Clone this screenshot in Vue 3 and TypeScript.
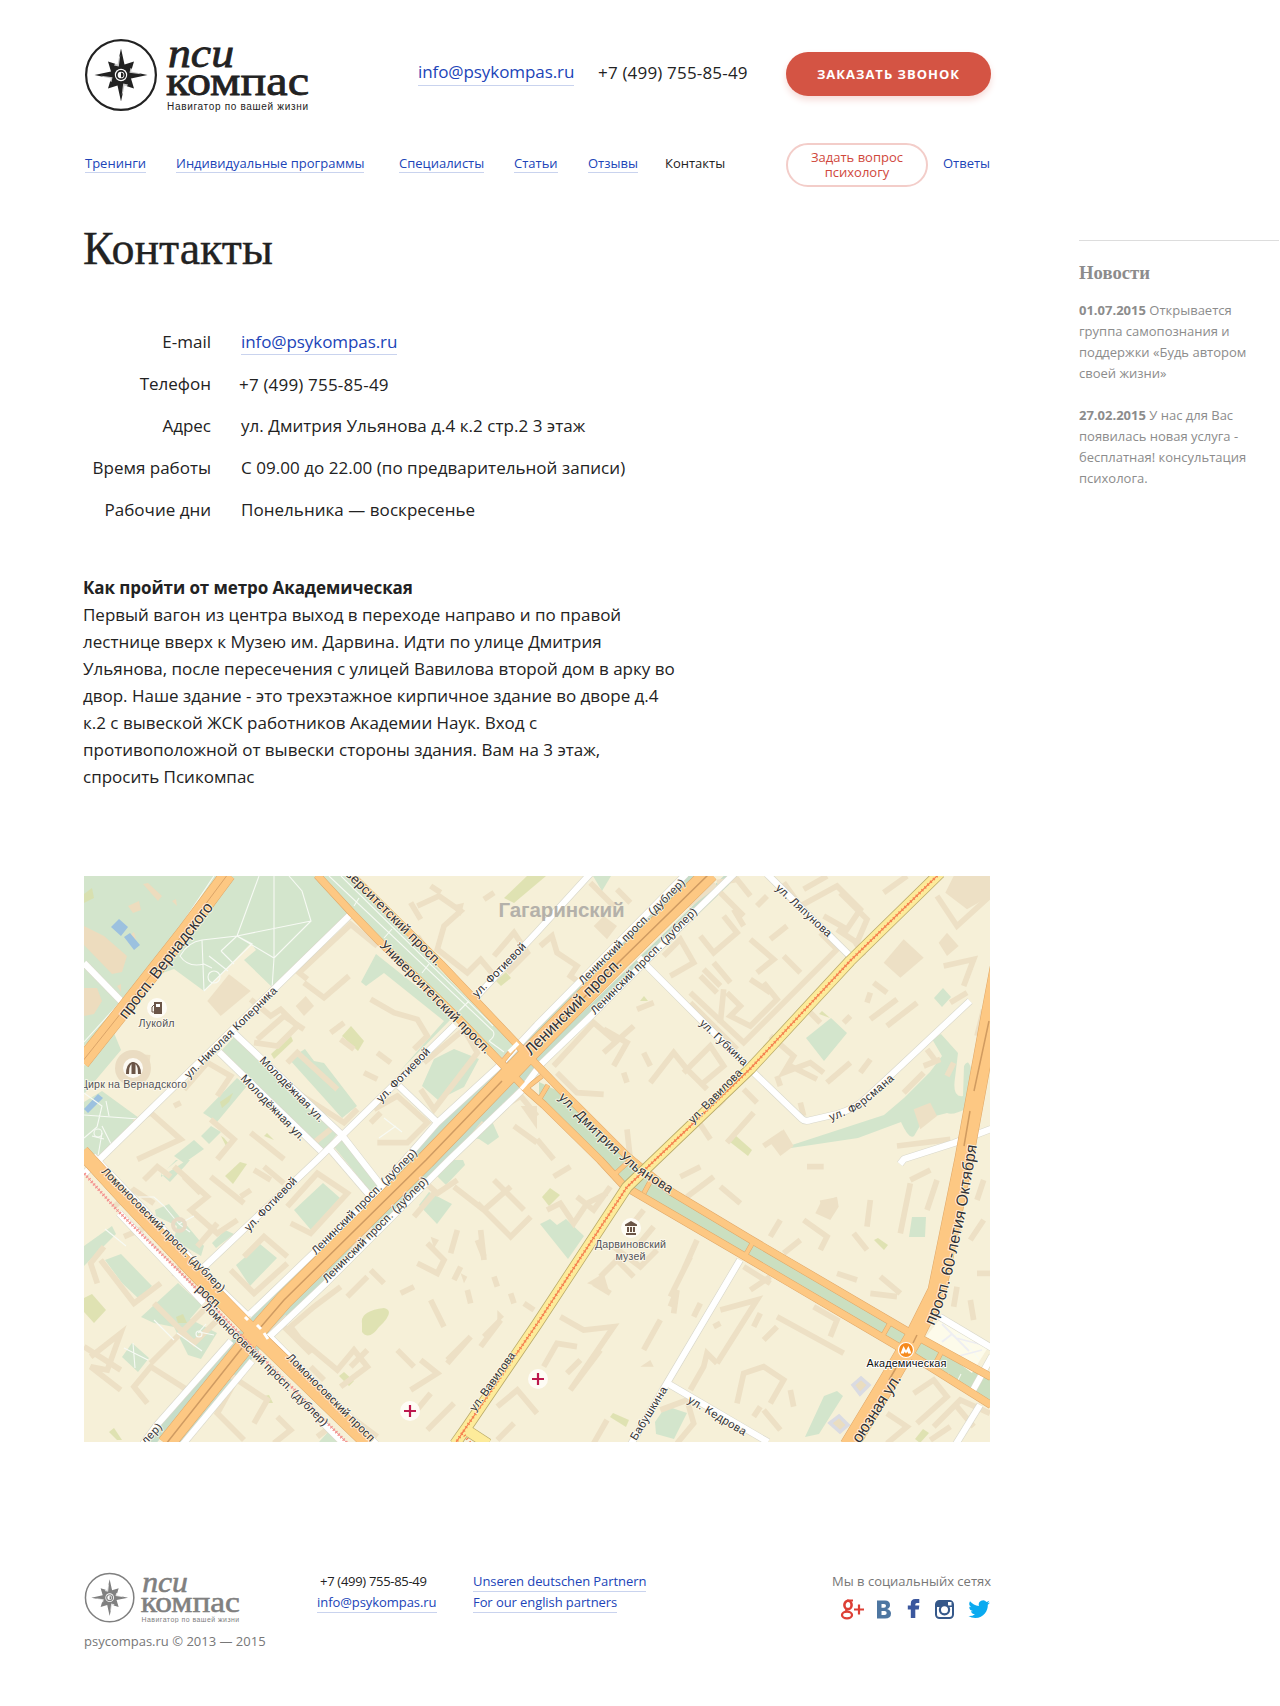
<script setup lang="ts">
interface Label { t: string; p: number[]; s?: number; c?: string }

const nav = ['Тренинги', 'Индивидуальные программы', 'Специалисты', 'Статьи', 'Отзывы', 'Контакты']

const contacts = [
  { k: 'E-mail', v: 'info@psykompas.ru', link: true },
  { k: 'Телефон', v: '+7 (499) 755-85-49', tel: true },
  { k: 'Адрес', v: 'ул. Дмитрия Ульянова д.4 к.2 стр.2 3 этаж' },
  { k: 'Время работы', v: 'С 09.00 до 22.00 (по предварительной записи)' },
  { k: 'Рабочие дни', v: 'Понельника — воскресенье' },
]

const route = [
  'Первый вагон из центра выход в переходе направо и по правой',
  'лестнице вверх к Музею им. Дарвина. Идти по улице Дмитрия',
  'Ульянова, после пересечения с улицей Вавилова второй дом в арку во',
  'двор. Наше здание - это трехэтажное кирпичное здание во дворе д.4',
  'к.2 с вывеской ЖСК работников Академии Наук. Вход с',
  'противоположной от вывески стороны здания. Вам на 3 этаж,',
  'спросить Псикомпас',
]

const news = [
  { d: '01.07.2015', l: ['Открывается', 'группа самопознания и', 'поддержки «Будь автором', 'своей жизни»'] },
  { d: '27.02.2015', l: ['У нас для Вас', 'появилась новая услуга -', 'бесплатная! консультация', 'психолога.'] },
]

// Street names: baseline points of each label in map coordinates
const labels: Label[] = [
  { t: 'просп. Вернадского', p: [42, 144, 130, 31], s: 16 },
  { t: 'ул. Николая Коперника', p: [105, 203, 194, 115] },
  { t: 'Молодёжная ул.', p: [175, 185, 236, 247] },
  { t: 'Молодёжная ул.', p: [156, 203, 217, 266] },
  { t: 'Университетский просп.', p: [295, 70, 402, 179], s: 13.5 },
  { t: 'Университетский просп.', p: [244, -18, 353, 91], s: 13.5 },
  { t: 'ул. Фотиевой', p: [393, 122, 443, 71] },
  { t: 'ул. Фотиевой', p: [297, 227, 347, 176] },
  { t: 'ул. Фотиевой', p: [165, 356, 214, 305] },
  { t: 'Ленинский просп. (дублер)', p: [499, 109, 602, 7] },
  { t: 'Ленинский просп. (дублер)', p: [511, 139, 614, 36] },
  { t: 'Ленинский просп.', p: [447, 180, 539, 88], s: 16 },
  { t: 'Ленинский просп. (дублер)', p: [232, 379, 334, 277] },
  { t: 'Ленинский просп. (дублер)', p: [243, 407, 345, 305] },
  { t: 'росп.', p: [111, 414, 134, 435], s: 13.5 },
  { t: 'Ломоносовский просп. (дублер)', p: [17, 296, 137, 417] },
  { t: 'Ломоносовский просп. (дублер)', p: [118, 431, 240, 551] },
  { t: 'Ломоносовский просп.', p: [202, 482, 289, 569] },
  { t: 'лер)', p: [62, 569, 79, 551] },
  { t: 'ул. Ляпунова', p: [691, 13, 744, 62] },
  { t: 'ул. Губкина', p: [615, 148, 660, 191] },
  { t: 'ул. Вавилова', p: [609, 248, 659, 197] },
  { t: 'ул. Ферсмана', p: [747, 245, 773, 235, 790, 221, 811, 203] },
  { t: 'ул. Дмитрия Ульянова', p: [474, 222, 508, 257, 531, 279, 550, 295, 586, 318], s: 13.5 },
  { t: 'ул. Вавилова', p: [391, 536, 432, 479] },
  { t: 'просп. 60-летия Октября', p: [850, 450, 862, 421, 870, 389, 882, 335, 893, 269], s: 16 },
  { t: 'оюзная ул.', p: [776, 568, 818, 502], s: 16 },
  { t: 'Бабушкина', p: [552, 565, 584, 513] },
  { t: 'ул. Кедрова', p: [603, 526, 660, 560] },
]

const path = (p: number[]) => {
  let d = ''
  for (let i = 0; i < p.length; i += 2) d += (i ? 'L' : 'M') + p[i] + ' ' + p[i + 1]
  return d
}
const len = (p: number[]) => {
  let s = 0
  for (let i = 2; i < p.length; i += 2) s += Math.hypot(p[i] - p[i - 2], p[i + 1] - p[i - 1])
  return s - 0.5
}

const white = [
  'M0 87L38 126', 'M268 37L17 282L0 298', 'M150 157L257 258L299 312', 'M135 176L237 275', 'M245 272L287 321',
  'M371 149L233 284L120 391', 'M393 120L453 56L506 -2', 'M315 210L355 248', 'M602 -2L453 149L413 192L353 247L290 319L165 439',
  'M651 -3L614 33L507 140L457 188L438 214L364 285L344 305L241 408L185 461', 'M147 465L72 550L59 568', 'M168 485L99 568',
  'M9 280L137 414L165 441M187 462L292 568', 'M35 337L120 427M238 546L260 568', 'M683 -2L766 80',
  'M555 82L666 193L718 243Q721 246 727 244L753 238Q770 233 780 224L806 200L886 125', 'M907 253L870 267L820 283L816 288',
  'M656 384L583 507L547 568', 'M583 507L684 566', 'M856 441L908 472', 'M908 480L888 516', 'M896 529L872 568',
]
const orange = [
  { d: 'M233 -1L268 37L297 67L375 143L420 190L443 214L460 229L516 284L540 310L660 380L813 470L907 529', w: 7 },
  { d: 'M266 -2L357 88L430 165L447 183L476 213L543 280L586 315L666 363L823 455L907 501', w: 7 },
  { d: 'M418 186L430 172M440 214L458 200M455 224L464 209M530 299L545 285M560 317L567 304M661 380L669 366M798 461L806 447M850 490L858 475', w: 4 },
  { d: 'M144 -2L100 57L37 137L-2 186', w: 15 },
  { d: 'M626 -3L536 85L453 169L430 193L342 284L200 424L172 456L82 568', w: 17.5 },
  { d: 'M-2 276L43 325L110 396L167 454L285 568', w: 14 },
  { d: 'M925 40L908 130L880 283L853 415L830 461L803 507L765 570', w: 18 },
]

// Building outlines, one group per quarter of the map, three units per pixel
const quads = [
  { x: 0, y: 0, b: [
    'M670 310L645 290L800 145L880 210M660 320L720 365L795 300', 'M500 370L560 420L590 400L640 450L580 510L510 500', 'M1000 90L1065 60L1130 105L1080 150L1060 220L1150 290L1190 250L1240 310', 'M860 370L930 410L1000 430L1030 480L990 520', 'M1020 560L1140 460L1180 530L1050 700L1010 640',
    'M520 490L600 420L660 460', 'M300 640L370 560L440 600L400 660', 'M150 740L200 710L290 790L160 850', 'M610 560L640 530L760 640M640 650L780 740L820 700', 'M740 470L780 440M770 490L810 520M880 530L920 560M840 590L880 610', 'M860 740L890 710M870 700L940 660L1030 740L970 800L880 800', 'M1200 70L1230 50M1040 30L1070 50', 'M1260 690L1310 660L1359 720M1290 750L1359 800', 'M1000 180L1040 240M980 80L1010 130', 'M1230 240L1290 170L1330 230L1270 290', 'M500 770L600 850M380 730L450 790L400 850', 'M1160 790L1200 740', 'M270 690L290 680M690 800L740 760', 'M130 540L190 545L185 600',
  ], f: ['370,375 435,295 500,345 410,420', '635,390 665,360 690,390 660,420', '1310,690 1359,690 1359,760', '1100,90 1140,80 1130,120'] },
  { x: 453, y: 0, b: [
    'M10 210L45 180L60 230L120 270L100 300L170 350', 'M160 20L230 90M240 40L280 80', 'M50 570L170 440L240 500M60 590L120 650L200 655M200 460L270 500L230 570', 'M380 240L430 190L470 260L400 300M450 90L530 30L620 120M560 120L600 170L530 230L490 180M540 20L600 10L640 60', 'M460 350L620 500L900 220L850 170M460 380L600 520M570 350L610 390L580 420L640 450L720 370L680 320', 'M490 300L540 350M500 280L550 330M530 260L580 320M640 310L700 350M740 240L790 290M640 190L710 250L660 290', 'M740 20L790 90L900 30L970 100L930 160L860 120M800 40L870 0M910 50L990 130L960 200L900 160', 'M1040 50L1110 0M1100 90L1180 20M1200 60L1260 150L1359 60', 'M950 190L980 240M1010 320L1050 350M940 420L920 440M1000 430L1080 370M1050 450L1140 380M870 620L940 560M1000 350L990 380',
    'M340 620L410 530L450 580L510 640M440 590L520 510L560 570L500 620M300 400L350 380M200 530L290 450M320 530L340 570M260 590L270 620', 'M700 480L770 540L740 590L820 560L860 590M760 570L840 610M720 600L730 630M540 690L560 670M620 640L660 680M480 730L520 790M570 800L650 710', 'M1160 570L1210 550M1170 520L1200 560M1100 650L1160 590M1140 720L1190 710M1080 810L1240 790M1220 270L1310 250L1280 330M1240 380L1290 350', 'M270 760L280 850M0 790L50 850M680 810L740 770M790 680L800 720M810 400L850 440M590 100L620 150M660 90L690 60M700 190L750 150M560 340L550 440', 'M1230 600L1250 560M1000 550L970 590M1320 480L1340 400',
  ], f: ['1040,260 1100,190 1160,245 1090,305', '1225,50 1250,0 1359,0 1359,60 1290,100', '1205,200 1230,170 1265,210 1230,240', '170,150 200,120 240,150 210,190', '1130,700 1180,680 1200,720 1150,760', '700,800 740,760 770,810 730,840'] },
  { x: 0, y: 284, b: [
    'M270 20L370 110L320 150L400 220L460 180M90 140L150 90L210 130M180 60L220 20L260 50M470 110L500 90M380 50L480 130M510 30L560 60', 'M610 140L700 40L790 100L680 220L620 190M480 290L540 230L610 290M440 330L510 400L610 310', 'M60 260L20 310L40 370M50 300L150 430L230 370M120 230L190 200L310 280L270 350', 'M350 100L300 50M340 260L400 190M20 590L110 520L70 630L20 620L110 690M210 430L330 550L400 480M310 690L200 620L150 680L190 730M200 610L380 430', 'M600 500L680 580L620 500L690 440L770 380M560 520L610 470M640 530L760 630L810 570L850 620L770 680M680 620L720 660',
    'M450 670L400 760L480 840M430 640L550 720L510 790M580 770L620 810L570 850M800 770L880 830M980 690L1060 640L1010 600M990 760L1040 700', 'M970 20L1060 100L1120 60M1110 80L1200 150L1280 80M1180 130L1280 230L1340 170M1230 60L1320 150', 'M990 170L1050 100M1180 240L1200 290M1130 320L1110 360M860 330L900 370M950 400L990 380M1040 420L1080 500M1150 390L1160 430M1230 350L1240 380M1280 400L1290 430M1190 560L1250 480L1200 530M1090 600L1160 530L1090 610M940 570L990 620M850 570L800 620M1000 310L1060 340L1080 300L1030 250M1100 280L1120 210', 'M1030 810L1110 730M1240 740L1300 690L1359 760M1240 840L1290 790M1190 210L1200 300M1320 430L1350 450M700 830L740 800M860 200L820 250L780 310M790 410L850 350', 'M0 560L110 630M540 20L600 70',
  ], f: ['1240,450 1260,470 1240,490', '1040,230 1065,240 1050,265', '1130,340 1150,350 1140,370'] },
  { x: 453, y: 284, b: [
    'M30 150L70 130L110 190L150 130L210 100M50 50L100 20M120 110L170 150L220 80', 'M190 350L240 300L290 350M230 260L310 320L360 270M300 260L350 200M170 370L220 400M280 200L320 150', 'M430 50L490 20M450 110L530 50M550 80L610 130', 'M440 330L480 240M400 440L420 390L410 460M470 470L490 430M320 570L370 480M530 500L550 490M550 450L660 420L540 610M460 290L400 410', 'M70 470L140 510L230 500L100 690L190 570M20 620L60 550L120 560M90 640L130 600', 'M460 690L500 620L510 580L540 610M600 730L620 640L680 620L740 660L700 730M720 470L920 580M680 540L720 500M650 500L670 460M760 690L770 740M680 750L730 810M650 770L670 740', 'M700 230L730 180M740 280L790 240M640 390L700 350M620 320L700 370M850 130L900 120M1000 120L990 200M1120 60L1180 30M1100 170L1120 70L1090 220M1030 350L1090 400M1000 400L1080 410M950 220L990 270M900 340L960 360M830 440L900 480L880 530', 'M800 180L870 230L850 270M1200 60L1170 150L1190 90M1230 150L1270 220M1300 240L1340 180M1320 120L1340 60M1300 420L1310 480M1250 440L1260 380M1320 340L1359 340', 'M1050 760L1110 800L1050 850M1130 700L1190 660L1230 710L1140 790M1190 800L1270 720L1359 760M1180 840L1240 800M1260 740L1310 800', 'M370 750L450 720L470 790L420 850M170 850L210 780M810 20L860 20',
  ], f: ['835,160 850,130 900,110 905,140 880,180', '150,370 200,340 215,390', '310,620 340,600 350,620'] },
]
</script>

<template>
  <div class="page">
    <svg class="defs" width="0" height="0">
      <defs>
        <symbol id="logo" viewBox="0 0 228 74">
          <circle cx="37" cy="37" r="34.900" fill="none" stroke="currentColor" stroke-width="2.200" />
          <path fill="currentColor" d="M37 10.500L40.500 26.500L50 23.500L47 33.500L63.500 37L47 40.500L50 50.500L40.500 47.500L37 63.500L33.500 47.500L24 50.500L27 40.500L10.500 37L27 33.500L24 23.500L33.500 26.500Z" />
          <path d="M36.300 17L34.800 28.500L30 27.500ZM17 37.700L28.500 39.200L27.500 44ZM57 36.300L45.500 34.800L46.500 30ZM37.700 57L39.200 45.500L44 46.500Z" fill="#fff" opacity=".75" transform="rotate(0 37 37)" />
          <circle cx="37" cy="37" r="6.200" fill="#fff" />
          <circle cx="37" cy="37" r="4.200" fill="none" stroke="currentColor" stroke-width="1.700" />
          <path d="M37 34.500a2.500 2.500 0 0 1 0 5z" fill="currentColor" />
          <text class="serif" x="84" y="29.300" font-size="41" font-style="italic" textLength="66" lengthAdjust="spacingAndGlyphs" stroke="currentColor" stroke-width=".8">пси</text>
          <text class="serif" x="82" y="57.300" font-size="43" textLength="143" lengthAdjust="spacingAndGlyphs" stroke="currentColor" stroke-width=".8">компас</text>
          <text class="sub" x="83" y="72" font-size="10" textLength="141">Навигатор по вашей жизни</text>
        </symbol>
      </defs>
    </svg>

    <div class="main">
      <header class="top">
        <svg class="logo" viewBox="0 0 228 74"><use href="#logo" /></svg>
        <a class="mail">info@psykompas.ru</a>
        <span class="phone">+7 (499) 755-85-49</span>
        <button class="call">Заказать звонок</button>
      </header>

      <nav class="nav">
        <div v-for="(n, i) in nav" :key="n"><a :class="{ current: i === 5 }">{{ n }}</a></div>
        <button class="ask">Задать вопрос<br>психологу</button>
        <div class="answers">Ответы</div>
      </nav>

      <h1>Контакты</h1>

      <dl class="contacts">
        <template v-for="c in contacts" :key="c.k">
          <dt>{{ c.k }}</dt>
          <dd :class="{ tel: c.tel, email: c.link }"><a v-if="c.link">{{ c.v }}</a><template v-else>{{ c.v }}</template></dd>
        </template>
      </dl>

      <section class="route">
        <h2>Как пройти от метро Академическая</h2>
        <p><template v-for="l in route" :key="l">{{ l }}<br></template></p>
      </section>

      <svg class="map" viewBox="0 0 906 566">
        <rect width="906" height="567" fill="#f6f0d8" />
        <g fill="#d3e5cc">
          <path d="M0 0H240L268 37L190 113L160 84L172 74L167 67L120 115L90 93L70 100L40 135L0 170Z" />
          <path d="M236 0H264L445 185L420 192Z" />
          <path d="M0 190L30 157L37 174L0 218ZM0 226L18 215L55 242L17 282L0 280Z" />
          <path d="M138 174L151 160L253 258L240 275ZM247 267L257 262L300 315L290 320Z" />
          <path d="M277 106L292 78L370 140L315 196L360 145L300 97L282 110ZM205 183L221 173L230 185L240 187L273 230L258 242Z" />
          <path d="M338 210L350 183L370 173L395 183L380 211L354 224ZM119 237L153 202L163 210L133 246ZM117 260L127 250L137 256L125 268ZM90 280L110 264L120 273L100 287Z" />
          <path d="M722 162L747 142L763 157L740 185ZM850 122L859 112L867 121L858 131ZM848 163L857 158L874 177L871 202Q868 222 879 220L880 190Q884 182 887 192L883 232Q869 240 863 237L840 243L830 260Q825 264 817 246L774 262L707 272Q703 270 711 268L800 239L820 222L846 196L858 180Z" />
          <path d="M456 348L466 343L473 349L482 343L500 360L484 383ZM828 341L842 341L841 361L825 361ZM571 546L582 530L603 537L590 563L572 558ZM740 520L753 515L759 520L735 558L721 561Z" />
          <path d="M77 301L103 284H92L77 299ZM101 290L86 306L77 298L94 284H106ZM210 334L239 307L256 322L227 354ZM152 389L176 368L193 382L166 410ZM71 334L85 328L120 370L117 380L90 364L93 350L72 340ZM0 370L28 350L32 358L0 390ZM21 384L37 378L68 410L55 423L38 407ZM57 441L94 407L118 429L106 443L133 457L117 483L104 479L90 451L70 447ZM38 481L48 467L65 482L54 496Z" />
          <path d="M353 300L361 284H379L381 289L362 309ZM335 329L345 316L368 328L353 348ZM128 367L141 354L150 358L132 372ZM389 262L407 243L415 261L404 269L395 263ZM509 0H527L518 15ZM235 566L244 556L253 566Z" />
        </g>
        <path d="M455 206L476 216L546 283L586 316L666 364L907 502V528L813 469L660 379L540 309L455 223Z" fill="#cbdfc0" />
        <path d="M650 -3L453 187L343 296L176 465L92 568M613 -5L453 158L418 195L290 320L168 448L65 568" fill="none" stroke="#c6ddc9" stroke-width="10" />
        <g fill="#d9dfa9" opacity=".8">
          <path d="M187 178L207 160L209 165L190 183ZM258 160L267 150L280 165L274 175ZM136 226L149 217L145 226L138 232ZM420 22L443 0H462L430 27ZM141 300L156 286L163 288L149 308ZM278 447Q276 435 300 432Q312 435 295 451Q285 465 278 456ZM0 422L8 418L22 434L10 447L0 436ZM255 500L260 496L270 505L265 510ZM646 266L651 259L668 274L664 280ZM458 321L466 312L476 319L465 330ZM790 364L794 362L804 369L800 374ZM526 541L529 537L545 544L542 551ZM831 563L839 553L845 557L836 567ZM137 260L140 262L145 268L142 270ZM180 260L183 257L190 264ZM412 105L422 96L427 102L417 110ZM556 125L560 120L564 125ZM735 138L738 135L746 142ZM0 18L8 12L10 22L0 27ZM25 556L30 552L38 564H33ZM180 520L185 519L189 527H184ZM92 441L99 438L103 447H94Z" />
        </g>
        <g fill="#eddcbe">
          <path d="M0 50L20 60L43 80L38 96L28 98L0 69ZM59 8L64 7L78 20L74 25ZM44 30L55 25L57 34L49 37ZM88 25L92 23L93 30ZM0 112H13L18 125L10 138L0 140ZM33 110L37 108V116ZM45 60L50 56L52 64Z" />
        </g>
        <g v-for="(q, i) in quads" :key="i" :transform="`translate(${q.x} ${q.y}) scale(.33333)`" fill="#ede0c5">
          <path v-for="d in q.b" :key="d" :d="d" fill="none" stroke="#ede0c5" stroke-width="17" />
          <polygon v-for="f in q.f" :key="f" :points="f" />
        </g>
        <g fill="#9cc1df"><path d="M27 51L35 43L44 51L37 60ZM40 61L46 57L56 69L50 74ZM0 233L14 218L19 222L4 237Z" /></g>
        <circle cx="49" cy="192" r="18" fill="#eadcc2" />
        <path d="M841 462L856 443L903 473L888 497Z" fill="#fdfbea" />
        <g fill="none" stroke="#f7faf4" stroke-width="1.100">
          <path d="M130 0L100 45L60 100L30 133L0 166M175 0L153 60M205 0L218 15L227 45L190 82L153 60M190 0V82L188 113M153 60L227 45M153 60L118 64Q104 66 96 80Q104 92 120 88L128 92M153 60L168 68L120 115M118 64L120 115M125 80L144 95M137 75L150 88M153 60L137 75" />
          <circle cx="130" cy="101" r="6" />
          <path d="M13 251L18 230L0 217M0 239L55 243M13 251L0 262M18 250L27 268M18 257L14 280M25 240L22 225M8 260L20 263" /><circle cx="14" cy="257" r="4" />
          <path d="M245 0L409 155Q412 160 405 165M257 0L409 150M275 22L270 30M308 53L300 62M345 88L338 97M385 125L375 135M405 165L420 176" />
          <path d="M40 472L64 484M49 467L51 492M70 444L90 464M93 457L118 475M115 456L130 459M114 457L122 448M95 348L80 330M95 348L110 340M95 348L106 356M55 321H70L80 330M300 242L318 256M295 262L312 250M855 465L875 458L895 483M864 497V505M877 498L873 506M21 353L42 370" />
          <circle cx="95" cy="349" r="6" stroke="#e8dbc5" stroke-width="4" /><circle cx="115" cy="458" r="3" />
        </g>
        <path d="M858 448L868 458L885 475M868 458L858 466M872 462L903 470M875 480L898 474" fill="none" stroke="#eeeef2" stroke-width="1.800" />
        <path d="M769 509L777 502L785 509L776 518ZM746 547L755 540L764 549L756 556Z" fill="#eaddc0" stroke="#dadbe2" stroke-width="3.500" />
        <g fill="none" stroke-linejoin="round">
          <path v-for="d in white" :key="d" :d="d" stroke="#d9d8cb" stroke-width="7.400" />
          <path v-for="d in white" :key="d" :d="d" stroke="#fff" stroke-width="6.200" />
          <path v-for="o in orange" :key="o.d" :d="o.d" stroke="#dfa768" :stroke-width="o.w + 1" />
          <path v-for="o in orange" :key="o.d" :d="o.d" stroke="#fdc883" :stroke-width="o.w" />
          <path d="M626 -3L536 85L465 157M418 205L342 284L200 424L176 452M158 472L82 568" stroke="#cf9b62" stroke-width="1.500" />
          <path d="M144 -2L100 57L37 137L-2 186" stroke="#dba468" stroke-width="1" />
          <path d="M905 145L890 215M886 235L880 270M833 459L829 467M812 492L805 504" stroke="#d09b60" stroke-width="1.500" />
          <path d="M161 441L164 444M173 449L177 453M180 457L184 463" stroke="#fff" stroke-width="3" />
          <path d="M425 176L434 167M437 213L446 203" stroke="#fff" stroke-width="4" />
          <path d="M856 -3L766 85L666 193L571 284L543 311L453 448L383 551L371 568M381 553L404 568" stroke="#b9aa69" stroke-width="11.500" />
          <path d="M856 -3L766 85L666 193L571 284L543 311L453 448L383 551L371 568M381 553L404 568" stroke="#fdeb9a" stroke-width="10" />
          <path d="M856 -3L766 85L666 193L571 284L543 311L453 448L381 553L371 568" stroke="#f5814f" stroke-width="1.200" />
          <path d="M856 -3L766 85L666 193L571 284L543 311L453 448L381 553L371 568M378 556L387 568" stroke="#f5814f" stroke-width="3" stroke-dasharray="1.200 2.800" />
          <path d="M-2 295L33 334L107 407L167 470L264 568" stroke="#f6a3a0" stroke-width="1" />
          <path d="M-2 295L33 334L107 407L167 470L264 568" stroke="#f4908d" stroke-width="3.200" stroke-dasharray="1.300 2.200" />
        </g>

        <g fill="#fffdf8" opacity=".9">
          <circle cx="73" cy="132" r="10" /><circle cx="49" cy="192" r="10" /><circle cx="547" cy="352" r="10" /><circle cx="326" cy="535" r="10" /><circle cx="454" cy="503" r="10" />
        </g>
        <g fill="#6b5547">
          <path d="M70 126h8v12h-8z" /><path d="M72 128h4v3h-4z" fill="#fff" /><path d="M70 129l-2 2v5h2" fill="none" stroke="#6b5547" />
          <path d="M42 198Q42 188 48 186H50Q57 188 57 198H54Q54 190 51.500 188V198H47.500V188Q45 190 45 198Z" />
          <path d="M541 348.500L547 345L553 348.500V350H541ZM543 351h2v5h-2zM546 351h2v5h-2zM549 351h2v5h-2zM542 357h10v2h-10z" />
        </g>
        <path d="M320 535h12M326 529v12M448 503h12M454 497v12" stroke="#bd184d" stroke-width="2.200" />

        <g class="halo" fill="#303136">
          <template v-for="(l, i) in labels" :key="i">
            <path :id="'st' + i" :d="path(l.p)" fill="none" stroke="none" />
            <text :font-size="l.s || 11.300" :textLength="len(l.p)"><textPath :href="'#st' + i" :textLength="len(l.p)">{{ l.t }}</textPath></text>
          </template>
        </g>
        <g class="halo" fill="#545459" font-size="10.700">
          <text x="54.500" y="151" textLength="36">Лукойл</text>
          <text x="-4" y="212" textLength="107">Цирк на Вернадского</text>
          <text x="511" y="371.500" textLength="71">Дарвиновский</text>
          <text x="531.500" y="384" textLength="30">музей</text>
        </g>
        <text x="414.500" y="41" font-size="20.500" font-weight="bold" fill="#b4b1aa" textLength="126">Гагаринский</text>
        <circle cx="822" cy="474" r="7.500" fill="#f68a1e" stroke="#fff" stroke-width="1.200" />
        <path d="M816.500 477.500L819.500 470L822 474.500L824.500 470L827.500 477.500H824L823.500 475.500L822 477.500L820.500 475.500L820 477.500Z" fill="#fff" />
        <text class="halo metro" x="782.500" y="490.500" font-size="11" textLength="80">Академическая</text>
      </svg>

      <footer class="foot">
        <div class="f-logo">
          <svg class="logo-small" viewBox="0 0 228 74"><use href="#logo" /></svg>
          <div class="copy">psycompas.ru © 2013 — 2015</div>
        </div>
        <div class="f-contact">
          <div class="f-phone">+7 (499) 755-85-49</div>
          <a>info@psykompas.ru</a>
        </div>
        <div class="f-partners">
          <div><a>Unseren deutschen Partnern</a></div>
          <div><a>For our english partners</a></div>
        </div>
        <div class="f-social">
          <div>Мы в социальныйх сетях</div>
          <svg width="152" height="22" viewBox="0 0 152 22">
            <g fill="none" stroke="#dd3f35">
              <ellipse cx="9" cy="6" rx="3.600" ry="4.200" stroke-width="2.600" />
              <ellipse cx="8" cy="16" rx="5" ry="3.400" stroke-width="2.300" />
              <path d="M8 1.500H14M9.500 9.500Q5 11 8.500 12.500" stroke-width="2" />
              <path d="M15 10.500H25M20 5.500V15.500" stroke-width="2.200" />
            </g>
            <path fill-rule="evenodd" d="M38 1.500H46Q51 1.500 51 6Q51 9 48 10Q52 11 52 14.500Q52 19.500 46 19.500H38ZM42.500 5V8.700H45Q47 8.700 47 6.800Q47 5 45 5ZM42.500 12V16H45.500Q47.700 16 47.700 14Q47.700 12 45.500 12Z" fill="#4d76a1" />
            <path transform="translate(.8 -.5)" d="M71 19.500V11H68V7H71V5Q71 .5 75.500 .5H79.500V4.500H77Q75.500 4.500 75.500 6V7H79.500L79 11H75.500V19.500Z" fill="#3b579d" />
            <g transform="translate(2 0)">
              <rect x="95" y="2" width="17" height="17" rx="3.500" fill="none" stroke="#35588a" stroke-width="2" />
              <path d="M95 3H112V8H95Z" fill="#35588a" /><rect x="107" y="3" width="3.500" height="3.500" fill="#fff" />
              <circle cx="103.500" cy="10.800" r="4.600" fill="#fff" stroke="#35588a" stroke-width="2.200" />
            </g>
            <path transform="translate(129.500 1)" d="M21.500 2.600a9 9 0 0 1-2.600.7A4.400 4.400 0 0 0 20.800.8a9 9 0 0 1-2.800 1.100 4.400 4.400 0 0 0-7.600 4A12.600 12.600 0 0 1 1.500 1.300a4.400 4.400 0 0 0 1.300 5.900 4.400 4.400 0 0 1-2-.5 4.400 4.400 0 0 0 3.600 4.400 4.400 4.400 0 0 1-2 .1 4.400 4.400 0 0 0 4.100 3A9 9 0 0 1 0 16a12.600 12.600 0 0 0 6.800 2c8.500 0 12.800-7.200 12.500-13.200a9 9 0 0 0 2.200-2.200z" fill="#0aaaf0" />
          </svg>
        </div>
      </footer>
    </div>

    <aside class="news">
      <h3>Новости</h3>
      <p v-for="n in news" :key="n.d"><b>{{ n.d }}</b> <template v-for="l in n.l" :key="l">{{ l }}<br></template></p>
    </aside>
  </div>
</template>

<style>
body { background: #fff; }
</style>

<style scoped>
.page { display: flex; width: 1280px; height: 1706px; overflow: hidden; font-family: "Open Sans", "Noto Sans", sans-serif; color: #222; }
.defs { position: absolute; }
.main { width: 907px; margin-left: 84px; flex: none; }
.top { height: 143px; display: flex; align-items: flex-start; }
.logo { width: 228px; height: 74px; margin-top: 38px; color: #222; flex: none; }
.serif { font-family: "Liberation Serif", serif; fill: currentColor; }
.sub { font-family: "Liberation Sans", sans-serif; fill: currentColor; }
a { color: #2044b8; border-bottom: 1px solid #c9d3ee; }
.mail { width: 156px; margin: 59px 0 0 106px; font-size: 17px; line-height: 26px; letter-spacing: -.08px; white-space: nowrap; }
.phone { margin: 59px 0 0 24px; font-size: 17px; line-height: 27px; letter-spacing: .18px; width: 188px; white-space: nowrap; }
button { font-family: inherit; padding: 0; flex: none; }
.call { width: 205px; height: 44px; margin-top: 52px; border: 0; border-radius: 22px; background: #d45444; color: #fff; font-size: 13px; font-weight: 700; letter-spacing: 1px; text-transform: uppercase; box-shadow: 0 4px 7px #f6dcd9; }
.nav { height: 44px; display: grid; grid-template-columns: 92px 222px 116px 74px 77px 121px 157px auto; font-size: 13px; line-height: 18px; white-space: nowrap; }
.nav > div { padding-top: 11px; }
.nav > div:nth-child(1), .nav > div:nth-child(3) { padding-left: 1px; }
.nav .current { color: #222; border: 0; }
.ask { width: 142px; height: 44px; border: 2px solid #f3cdc9; border-radius: 22px; background: #fff; color: #d0483c; font-size: 13px; line-height: 15px; }
.nav .answers { color: #2044b8; }
h1 { margin: 34px 0 0 -1px; height: 57px; font: 400 46px/56px "Liberation Serif", serif; -webkit-text-stroke: .35px #222; white-space: nowrap; }
.contacts { margin: 43px 0 0; display: grid; grid-template-columns: 127px auto; column-gap: 30px; grid-auto-rows: 42px; font-size: 17px; line-height: 42px; white-space: nowrap; }
.contacts dt { text-align: right; }
.contacts dd { margin: 0; letter-spacing: .04px; }
.contacts .email { letter-spacing: -.08px; }
.contacts .email a { padding-bottom: 1px; }
.contacts .tel { margin-left: -2px; letter-spacing: .18px; line-height: 44px; height: 42px; }
.route { margin: 43px 0 0 -1px; height: 302px; font-size: 17px; line-height: 27px; white-space: nowrap; }
.route h2 { margin: 0; font-size: 17px; line-height: 27px; font-weight: 700; letter-spacing: -.08px; }
.route p { margin: 0; letter-spacing: -.01px; }
.map { display: block; width: 906px; height: 566px; overflow: hidden; font-family: "Liberation Sans", Arial, sans-serif; }
.halo text, .metro { stroke: #fffbef; stroke-opacity: .75; stroke-width: 2px; paint-order: stroke; stroke-linejoin: round; }
.metro { stroke: #fff; stroke-opacity: 1; fill: #111; }
.foot { display: flex; margin-top: 129px; font-size: 13px; line-height: 21px; color: #777; white-space: nowrap; }
.f-logo { width: 233px; }
.logo-small { display: block; width: 158px; height: 51.300px; margin-top: 1px; color: #808080; }
.copy { margin-top: 8px; }
.f-contact { width: 156px; letter-spacing: -.06px; }
.f-phone { color: #222; padding-left: 3px; letter-spacing: -.3px; }
.f-partners { flex: 1; letter-spacing: -.08px; }
.f-partners a, .f-contact a { padding-bottom: 1px; }
.f-social { text-align: right; }
.f-social svg { display: block; margin: 7px 0 0 auto; }
.news { width: 200px; height: 260px; margin: 240px 0 0 88px; border-top: 1px solid #ddd; color: #8c8c8c; font-size: 13px; line-height: 21px; white-space: nowrap; flex: none; }
.news h3 { margin: 19px 0 14px; font: 700 18.700px/26px "Liberation Serif", serif; }
.news p { margin: 0 0 21px; }
</style>
